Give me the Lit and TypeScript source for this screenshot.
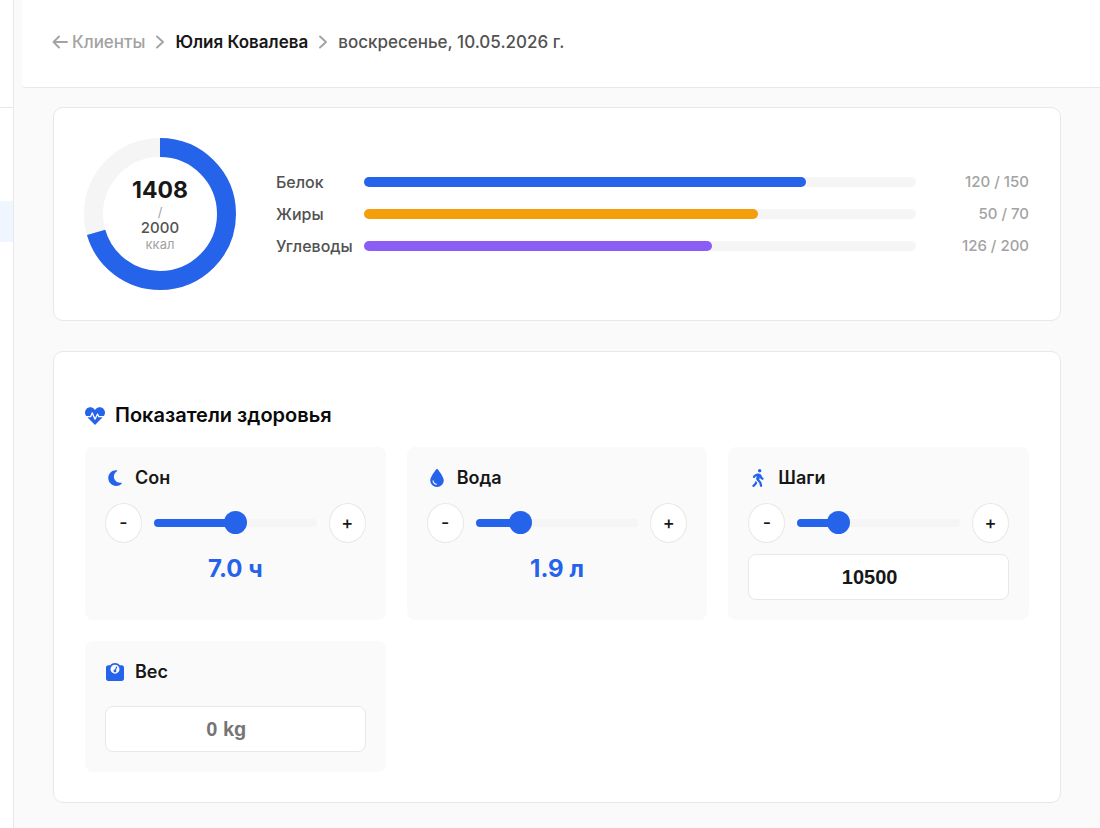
import { LitElement, html, css, svg } from "lit";
import { customElement, property } from "lit/decorators.js";
import { styleMap } from "lit/directives/style-map.js";

const ICONS = {
  heart: svg`<svg viewBox="0 0 512 512" width="20" height="20" aria-hidden="true"><path fill="currentColor" d="M320.200 243.800l-49.700 99.400c-6 12.100-23.400 11.700-28.900-.6l-56.900-126.300-30 71.700H60.600l182.500 186.500c7.100 7.300 18.600 7.300 25.700 0L451.400 288H342.300l-22.100-44.200zM473.700 73.900l-2.400-2.500c-51.500-52.600-135.800-52.600-187.400 0L256 100l-27.900-28.500c-51.500-52.700-135.900-52.700-187.400 0l-2.400 2.400C-10.400 123.700-12.500 203 31 256h102.400l35.900-86.200c5.400-12.900 23.600-13.200 29.400-.4l58.200 129.300 49-97.900c5.900-11.800 22.700-11.800 28.600 0l27.600 55.200H481c43.500-53 41.400-132.300-7.300-182.100z"/></svg>`,
  moon: svg`<svg viewBox="0 0 384 512" width="20" height="18" aria-hidden="true"><path fill="currentColor" d="M223.500 32C100 32 0 132.300 0 256s100 224 223.500 224c60.600 0 115.500-24.200 155.800-63.400 5-4.900 6.300-12.500 3.100-18.700s-10.100-9.700-17-8.500c-9.800 1.700-19.800 2.600-30.100 2.600-96.900 0-175.500-78.800-175.500-176 0-65.800 36-123.100 89.300-153.300 6.100-3.500 9.200-10.500 7.700-17.300s-7.300-11.900-14.300-12.500c-6.300-.5-12.600-.8-19-.8z"/></svg>`,
  drop: svg`<svg viewBox="0 0 384 512" width="20" height="18" aria-hidden="true"><path fill="currentColor" d="M192 512C86 512 0 426 0 320 0 228.800 130.200 57.700 166.600 11.700 172.600 4.200 181.500 0 191.100 0h1.800c9.600 0 18.500 4.200 24.500 11.700C253.800 57.700 384 228.800 384 320c0 106-86 192-192 192zM96 336c0-8.800-7.200-16-16-16s-16 7.200-16 16c0 61.900 50.100 112 112 112 8.800 0 16-7.200 16-16s-7.200-16-16-16c-44.200 0-80-35.800-80-80z"/></svg>`,
  walk: svg`<svg viewBox="0 0 320 512" width="20" height="18" aria-hidden="true"><path fill="currentColor" d="M208 96c26.500 0 48-21.500 48-48S234.500 0 208 0s-48 21.500-48 48 21.500 48 48 48zm94.500 149.100l-23.300-11.800-9.700-29.400c-14.700-44.600-55.700-75.800-102.200-75.900-36-.1-55.900 10.100-93.300 25.200-21.600 8.700-39.300 25.200-49.700 46.200L17.600 213c-7.800 15.800-1.500 35 14.200 42.900 15.600 7.900 34.600 1.500 42.500-14.300L81 228c3.500-7 9.300-12.500 16.500-15.400l26.800-10.800-15.200 60.700c-5.200 20.800.4 42.900 14.900 58.800l59.900 65.400c7.200 7.900 12.300 17.400 14.900 27.700l18.300 73.300c4.300 17.100 21.700 27.600 38.800 23.300 17.100-4.300 27.600-21.700 23.300-38.800l-22.200-89c-2.600-10.300-7.700-19.900-14.900-27.700l-45.500-49.700 17.200-68.700 5.500 16.500c5.300 16.100 16.700 29.400 31.700 37l23.300 11.800c15.600 7.900 34.600 1.500 42.500-14.300 7.700-15.700 1.400-35.100-14.300-43zM73.600 385.800c-3.200 8.100-8 15.400-14.200 21.500l-50 50.100c-12.500 12.500-12.500 32.800 0 45.300s32.700 12.500 45.200 0l59.400-59.400c6.100-6.100 10.900-13.400 14.200-21.500l13.500-33.800c-55.300-60.300-38.700-41.800-47.400-53.700l-20.700 51.500z"/></svg>`,
  scale: svg`<svg viewBox="0 0 512 512" width="20" height="18" aria-hidden="true"><path fill="currentColor" fill-rule="evenodd" d="M391.800 64C359.500 24.900 310.700 0 256 0S152.500 24.900 120.200 64H64C28.700 64 0 92.700 0 128v320c0 35.300 28.700 64 64 64h384c35.300 0 64-28.700 64-64V128c0-35.300-28.700-64-64-64h-56.200zM128 176a128 128 0 1 1 256 0 128 128 0 1 1-256 0z"/><path fill="currentColor" d="M296 224c0 22.100-17.900 40-40 40s-40-17.900-40-40c0-21.600 17.100-39.200 38.500-40l35.100-78.200c3.600-8.100 13-11.700 21.100-8.100s11.700 13 8.100 21.100l-34.600 77.100C291.300 203.200 296 213.100 296 224z"/></svg>`,
  back: svg`<svg viewBox="0 0 16 16" width="16" height="16" aria-hidden="true"><path fill="none" stroke="currentColor" stroke-width="1.900" stroke-linecap="round" stroke-linejoin="round" d="M15 8H1.500M7 2.500 1.500 8 7 13.500"/></svg>`,
  chevron: svg`<svg viewBox="0 0 10 16" width="10" height="16" aria-hidden="true"><path fill="none" stroke="currentColor" stroke-width="1.900" stroke-linecap="round" stroke-linejoin="round" d="M2 2.500 8 8l-6 5.500"/></svg>`,
};

const MACROS = [
  { name: "Белок", eaten: 120, goal: 150, tone: "protein" },
  { name: "Жиры", eaten: 50, goal: 70, tone: "fat" },
  { name: "Углеводы", eaten: 126, goal: 200, tone: "carbs" },
];

@customElement("calorie-ring")
class CalorieRing extends LitElement {
  @property({ type: Number }) value = 0;
  @property({ type: Number }) goal = 1;

  static styles = css`
    :host { display: grid; width: 152px; height: 152px; flex: none; }
    svg, .text { grid-area: 1 / 1; }
    .track { stroke: #f5f5f5; }
    .arc { stroke: #2563eb; }
    .text { display: flex; flex-direction: column; align-items: center; justify-content: center; color: #a3a3a3; }
    .value { font-size: 23px; line-height: 28px; font-weight: 700; color: #171717; }
    .slash { font-size: 13px; line-height: 16px; }
    .goal { font-size: 15px; line-height: 16px; font-weight: 500; color: #525252; }
    .unit { font-size: 13px; line-height: 16px; }
  `;

  render() {
    const length = 2 * Math.PI * 66.5;
    return html`
      <svg viewBox="0 0 152 152" fill="none" stroke-width="19" aria-hidden="true">
        <circle class="track" cx="76" cy="76" r="66.5" />
        <circle class="arc" cx="76" cy="76" r="66.5" transform="rotate(-90 76 76)"
          stroke-dasharray="${(length * this.value) / this.goal} ${length}" />
      </svg>
      <div class="text">
        <span class="value">${this.value}</span>
        <span class="slash">/</span>
        <span class="goal">${this.goal}</span>
        <span class="unit">ккал</span>
      </div>
    `;
  }
}

@customElement("health-metric")
class HealthMetric extends LitElement {
  @property() label = "";
  @property() icon: keyof typeof ICONS = "moon";
  @property() unit = "";
  @property() mode: "readout" | "field" | "empty" = "readout";
  @property({ type: Number }) value = 0;
  @property({ type: Number }) max = 1;
  @property({ type: Number }) step = 1;

  static styles = css`
    :host { display: block; padding: 20px; border-radius: 8px; background: #fafafa; }
    * { box-sizing: border-box; }
    .title { display: flex; align-items: center; gap: 10px; margin: 0 0 14px; font-size: 18px; line-height: 22px; font-weight: 600; color: #171717; }
    .title svg { flex: none; color: #2563eb; }
    .controls { display: flex; align-items: center; gap: 12px; }
    button { flex: none; width: 37px; height: 40px; padding: 0; border: 1px solid #e8e8e8; border-radius: 50%; background: #fff; color: #171717; font: 500 18px/24px Inter, sans-serif; cursor: pointer; }
    .slider { flex: 1; min-width: 0; height: 24px; margin: 0; appearance: none; background: transparent; }
    .slider::-webkit-slider-runnable-track { height: 8px; border-radius: 4px; background: linear-gradient(to right, #2563eb var(--fill), #f5f5f5 var(--fill)); }
    .slider::-webkit-slider-thumb { appearance: none; width: 23px; height: 23px; margin-top: -8px; border-radius: 50%; background: #2563eb; }
    .readout { display: block; margin-top: 10px; text-align: center; font-size: 24px; line-height: 32px; font-weight: 700; color: #2563eb; }
    .field { display: block; width: 100%; height: 46px; margin-top: 11px; padding: 0 30px 0 12px; border: 1px solid #e8e8e8; border-radius: 8px; background: #fff; text-align: center; font: 700 20px/24px "Liberation Sans", Arial, sans-serif; color: #171717; }
    .field::placeholder { color: #757575; }
    .lone { margin-top: 23px; }
  `;

  private set(v: number) {
    this.value = Math.min(this.max, Math.max(0, v));
  }

  render() {
    if (this.mode === "empty") {
      return html`
        <label class="title" for="amount">${ICONS[this.icon]}${this.label}</label>
        <input class="field lone" id="amount" inputmode="decimal" placeholder="0 ${this.unit}" />
      `;
    }
    const fill = `${(this.value / this.max) * 100}%`;
    return html`
      <label class="title" for="range">${ICONS[this.icon]}${this.label}</label>
      <div class="controls">
        <button type="button" aria-label="Уменьшить" @click=${() => this.set(this.value - this.step)}>-</button>
        <input class="slider" id="range" type="range" min="0" max=${this.max} step=${this.step}
          .value=${String(this.value)} style=${styleMap({ "--fill": fill })}
          @input=${(e: Event) => this.set(Number((e.target as HTMLInputElement).value))} />
        <button type="button" aria-label="Увеличить" @click=${() => this.set(this.value + this.step)}>+</button>
      </div>
      ${this.mode === "readout"
        ? html`<output class="readout" for="range">${this.value.toFixed(1)} ${this.unit}</output>`
        : html`<input class="field" aria-label=${this.label} inputmode="numeric" .value=${String(this.value)}
            @change=${(e: Event) => this.set(Number((e.target as HTMLInputElement).value))} />`}
    `;
  }
}

@customElement("app-root")
class AppRoot extends LitElement {
  static styles = css`
    :host { display: flex; min-height: 100vh; background: #fafafa; color: #171717; font-family: Inter, "Noto Sans", sans-serif; }
    * { box-sizing: border-box; }
    .rail { flex: none; width: 14px; padding-top: 107px; border-right: 1px solid #e8e8e8; background: #fff; }
    .rail-nav { border-top: 1px solid #e8e8e8; padding-top: 93px; }
    .rail-active { height: 41px; background: #eff6ff; }
    .page { flex: 1; min-width: 0; padding-left: 8px; }
    .header { display: flex; align-items: center; height: 88px; padding: 0 30px 3px; border-bottom: 1px solid #e8e8e8; border-bottom-left-radius: 4px; background: #fff; }
    .crumbs { display: flex; align-items: center; gap: 10px; font-size: 17px; line-height: 24px; font-weight: 500; color: #a3a3a3; }
    .crumbs a { display: flex; align-items: center; gap: 4px; color: inherit; text-decoration: none; }
    .crumbs .person { font-weight: 600; color: #171717; }
    .crumbs .date { color: #525252; }
    .content { display: flex; flex-direction: column; gap: 30px; padding: 19px 39px 25px 31px; }
    .card { padding: 30px 31px; border: 1px solid #e8e8e8; border-radius: 10px; background: #fff; }
    .summary { display: flex; align-items: center; gap: 40px; padding-left: 30px; }
    .macros { flex: 1; display: grid; grid-template-columns: auto 1fr 102px; align-items: center; gap: 8px 11px; font-size: 16px; line-height: 24px; font-weight: 500; }
    .name { color: #525252; }
    .amount { text-align: right; font-size: 15px; color: #a3a3a3; }
    .bar { height: 10px; border-radius: 5px; background: #f5f5f5; }
    .fill { height: 100%; border-radius: 5px; }
    .protein { background: #2563eb; }
    .fat { background: #f59e0b; }
    .carbs { background: #8b5cf6; }
    .heading { display: flex; align-items: center; gap: 10px; margin: 21px 0 19px; font-size: 20px; line-height: 25px; font-weight: 600; color: #0a0a0a; }
    .heading svg { flex: none; color: #2563eb; }
    .metrics { display: grid; grid-template-columns: repeat(3, minmax(0, 1fr)); gap: 21px; }
  `;

  render() {
    return html`
      <aside class="rail"><div class="rail-nav"><div class="rail-active"></div></div></aside>
      <main class="page">
        <header class="header">
          <nav class="crumbs">
            <a href="#clients">${ICONS.back}Клиенты</a>
            ${ICONS.chevron}
            <a class="person" href="#client">Юлия Ковалева</a>
            ${ICONS.chevron}
            <span class="date">воскресенье, 10.05.2026 г.</span>
          </nav>
        </header>
        <div class="content">
          <section class="card summary">
            <calorie-ring .value=${1408} .goal=${2000}></calorie-ring>
            <div class="macros">
              ${MACROS.map((m) => html`
                <span class="name">${m.name}</span>
                <div class="bar"><div class="fill ${m.tone}" style=${styleMap({ width: `${(m.eaten / m.goal) * 100}%` })}></div></div>
                <span class="amount">${m.eaten} / ${m.goal}</span>
              `)}
            </div>
          </section>
          <section class="card">
            <h2 class="heading">${ICONS.heart}Показатели здоровья</h2>
            <div class="metrics">
              <health-metric label="Сон" icon="moon" unit="ч" .value=${7} .max=${14} .step=${0.5}></health-metric>
              <health-metric label="Вода" icon="drop" unit="л" .value=${1.9} .max=${8} .step=${0.1}></health-metric>
              <health-metric label="Шаги" icon="walk" mode="field" .value=${10500} .max=${50000} .step=${500}></health-metric>
              <health-metric label="Вес" icon="scale" mode="empty" unit="kg"></health-metric>
            </div>
          </section>
        </div>
      </main>
    `;
  }
}
